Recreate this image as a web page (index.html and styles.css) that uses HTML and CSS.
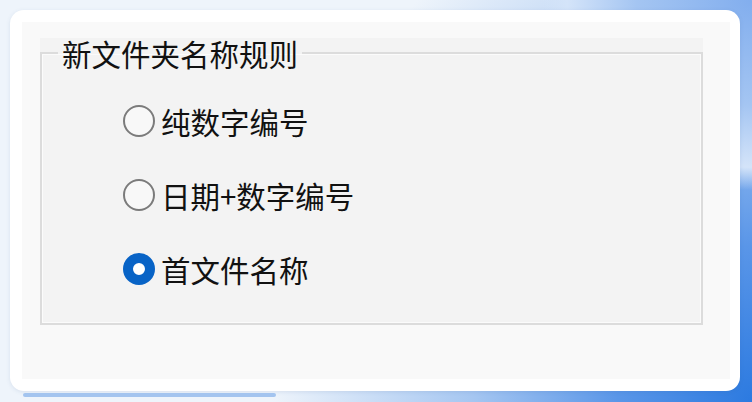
FILE: index.html
```html
<!DOCTYPE html>
<html lang="zh-CN">
<head>
<meta charset="utf-8">
<title>新文件夹名称规则</title>
<link rel="stylesheet" href="styles.css">
</head>
<body>
<div class="stage">
  <div class="card">
    <div class="panel">
      <div class="group-wrap">
        <fieldset class="group">
          <legend class="legend">新文件夹名称规则</legend>
          <div class="options">
            <label class="option"><span class="radio"></span><span class="label">纯数字编号</span></label>
            <label class="option"><span class="radio"></span><span class="label">日期+数字编号</span></label>
            <label class="option"><span class="radio checked"></span><span class="label">首文件名称</span></label>
          </div>
        </fieldset>
      </div>
    </div>
  </div>
  <div class="progress"></div>
</div>
</body>
</html>
```

FILE: styles.css
```css
html, body {
  margin: 0;
  padding: 0;
}
body {
  width: 752px;
  height: 402px;
  overflow: hidden;
  font-family: "Noto Sans CJK SC", "Noto Sans", sans-serif;
  background:
    radial-gradient(ellipse 210px 190px at 100% 0%, #82aeee 0%, #a4c5f2 55%, #d4e4f9 88%, rgba(238,244,252,0) 100%),
    radial-gradient(ellipse 480px 560px at 100% 100%, #2c7ae0 0%, #5a96e8 28%, #a5c6f1 58%, rgba(238,244,252,0) 100%),
    #eef4fb;
}
.stage {
  padding: 10px 0 0 10px;
}
.card {
  width: 730px;
  height: 381px;
  box-sizing: border-box;
  background: #ffffff;
  border-radius: 14px;
  padding: 12px 10px 12px 12px;
  box-shadow: 0 1px 4px rgba(60, 90, 140, 0.12);
}
.panel {
  height: 100%;
  box-sizing: border-box;
  background: #f9f9f9;
  padding: 16px 0 0 18px;
}
.group-wrap {
  width: 663px;
  background: #f3f3f3;
}
.group {
  margin: 0;
  padding: 0;
  border: 2px solid #dcdcdc;
  box-shadow: inset 0 0 0 1px #fbfbfb;
  background: #f3f3f3;
  min-width: 0;
}
.legend {
  margin-left: 16px;
  padding: 0 4px;
  font-size: 29.5px;
  line-height: 30px;
  color: #111111;
}
.options {
  display: flex;
  flex-direction: column;
  gap: 34px;
  padding: 33px 0 34px 81px;
}
.option {
  display: flex;
  align-items: center;
  height: 40px;
  gap: 6px;
}
.radio {
  width: 32px;
  height: 32px;
  box-sizing: border-box;
  border-radius: 50%;
  border: 2px solid #7b7b7b;
  background: #f8f8f8;
  flex: none;
}
.radio.checked {
  border: 10px solid #0863c6;
  background: #ffffff;
}
.label {
  font-size: 29.5px;
  line-height: 40px;
  color: #111111;
}
.progress {
  margin: 2px 0 0 13px;
  width: 253px;
  height: 4px;
  border-radius: 2px;
  background: #a3c4ef;
}
```
